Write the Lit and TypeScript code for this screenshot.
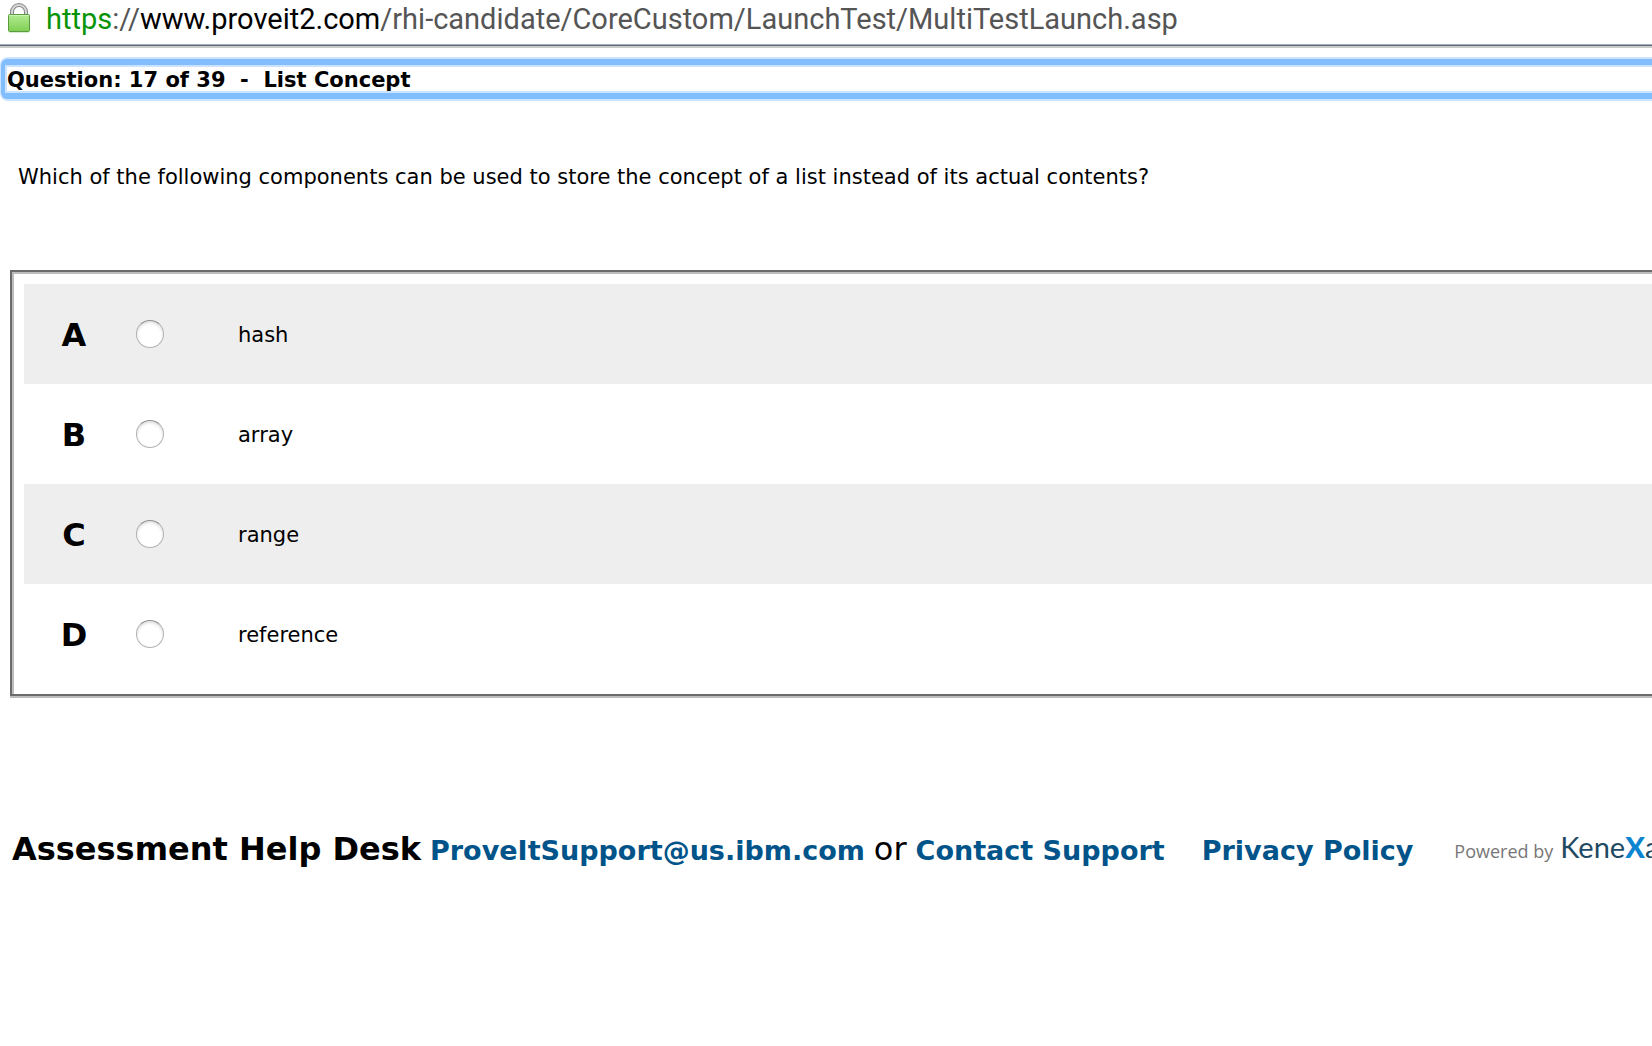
import { LitElement, html, css } from "lit";
import { customElement, state } from "lit/decorators.js";

interface Option {
  letter: string;
  text: string;
}

const OPTIONS: Option[] = [
  { letter: "A", text: "hash" },
  { letter: "B", text: "array" },
  { letter: "C", text: "range" },
  { letter: "D", text: "reference" },
];

@customElement("address-bar")
class AddressBar extends LitElement {
  static styles = css`
    :host {
      display: block;
    }
    .bar {
      display: flex;
      align-items: center;
      gap: 16px;
      height: 45px;
      box-sizing: border-box;
      padding: 0 8px 7px;
      background: #fff;
      border-bottom: 1px solid #9fb0c4;
      box-shadow: 0 1px 0 #66696d, 0 3px 0 #cbcbcb;
    }
    .lock {
      display: block;
      flex: none;
    }
    .url {
      font: 29px/36px Roboto, Inter, sans-serif;
      color: #555;
      white-space: nowrap;
    }
    .scheme {
      color: #079407;
    }
    .host {
      color: #000;
    }
  `;

  render() {
    return html`
      <header class="bar">
        <svg class="lock" width="22" height="32" viewBox="0 0 22 32" aria-hidden="true">
          <defs>
            <linearGradient id="body" x1="0" y1="0" x2="0" y2="1">
              <stop offset="0" stop-color="#b4eb94" />
              <stop offset="1" stop-color="#7fcf52" />
            </linearGradient>
          </defs>
          <path d="M4 12V9a7 7 0 0 1 14 0v3" fill="none" stroke="#858585" stroke-width="4" />
          <path d="M4 12V9a7 7 0 0 1 14 0v3" fill="none" stroke="#d6d6d6" stroke-width="2" />
          <rect x="0.5" y="11.5" width="21" height="17" rx="1" fill="url(#body)" stroke="#5b9b40" />
          <path d="M1.5 12.5h19" stroke="#c9f3b0" />
          <path d="M1 29.5h20" stroke="#d5ecd0" />
        </svg>
        <span class="url"><span class="scheme">https</span>://<span class="host">www.proveit2.com</span>/rhi-candidate/CoreCustom/LaunchTest/MultiTestLaunch.asp</span>
      </header>
    `;
  }
}

@customElement("answer-list")
class AnswerList extends LitElement {
  @state() private selected = "";

  static styles = css`
    :host {
      display: block;
    }
    .box {
      padding: 12px 0 10px 12px;
      border: 2px solid #6b6b6b;
      border-right: 0;
      box-shadow: inset 2px 2px 0 #bdbdbd, 0 2px 0 #bdbdbd;
    }
    .row {
      display: grid;
      grid-template-columns: 100px 52px 1fr;
      align-items: center;
      height: 100px;
      font-size: 21px;
      line-height: 28px;
    }
    .row:nth-child(odd) {
      background: #eee;
    }
    .letter {
      text-align: center;
      font-size: 32px;
      line-height: 40px;
      font-weight: bold;
    }
    .letter,
    .text {
      padding-top: 2px;
    }
    .radio {
      appearance: none;
      box-sizing: border-box;
      width: 28px;
      height: 28px;
      margin: 0 0 0 12px;
      border: 1px solid #b2b2b2;
      border-top-color: #8f8f8f;
      border-radius: 50%;
      background: #fff;
      box-shadow: inset 0 2px 3px #e0e0e0;
    }
    .radio:checked {
      background: radial-gradient(circle, #333 0 5px, #fff 6px);
    }
    .text {
      padding-left: 62px;
    }
  `;

  render() {
    return html`
      <div class="box" role="radiogroup" aria-label="Answers">
        ${OPTIONS.map(
          (o) => html`
            <label class="row">
              <span class="letter">${o.letter}</span>
              <input
                class="radio"
                type="radio"
                name="answer"
                .value=${o.letter}
                .checked=${this.selected === o.letter}
                @change=${() => (this.selected = o.letter)}
              />
              <span class="text">${o.text}</span>
            </label>
          `
        )}
      </div>
    `;
  }
}

@customElement("help-footer")
class HelpFooter extends LitElement {
  static styles = css`
    :host {
      display: block;
    }
    .footer {
      display: flex;
      align-items: baseline;
      gap: 9px;
      padding-left: 12px;
      font-size: 32px;
      line-height: 40px;
      white-space: nowrap;
    }
    .link {
      font-size: 27px;
      font-weight: bold;
      color: #00548a;
      text-decoration: none;
    }
    .privacy {
      padding: 0 32px 0 28px;
    }
    .brand {
      display: flex;
      align-items: baseline;
      align-self: flex-start;
      gap: 7px;
      color: #777;
      font-family: "Open Sans", sans-serif;
      font-size: 18px;
      line-height: 36px;
    }
    .logo {
      font-family: Lato, sans-serif;
      font-size: 29px;
      color: #1f4a63;
    }
    .x {
      color: #0b85d0;
      font-weight: 900;
    }
  `;

  render() {
    return html`
      <footer class="footer">
        <strong>Assessment Help Desk</strong>
        <a class="link" href="mailto:ProveItSupport@us.ibm.com">ProveItSupport@us.ibm.com</a>
        <span>or</span>
        <a class="link" href="#contact">Contact Support</a>
        <a class="link privacy" href="#privacy">Privacy Policy</a>
        <span class="brand">Powered by <span class="logo">Kene<span class="x">X</span>a</span></span>
      </footer>
    `;
  }
}

@customElement("app-root")
class AppRoot extends LitElement {
  static styles = css`
    :host {
      display: block;
      min-height: 100vh;
      overflow: hidden;
      background: #fff;
      color: #000;
      font-family: Verdana, "DejaVu Sans", sans-serif;
    }
    .ring {
      margin-top: 12px;
      border: solid #cbe3fe;
      border-width: 2px 0 2px 1px;
      border-radius: 8px 0 0 8px;
    }
    .heading {
      margin: 0;
      border: solid #82bdfd;
      border-width: 6px 0 6px 4px;
      border-radius: 6px 0 0 6px;
      font-size: 21px;
      line-height: 21px;
      font-weight: bold;
      white-space: pre;
    }
    .title {
      display: block;
      padding-top: 3px;
      border: solid #cbe3fe;
      border-width: 2px 0 2px 2px;
    }
    .question {
      margin: 0;
      padding: 61px 18px 77px;
      font-size: 21px;
      line-height: 31px;
    }
    .answers {
      margin-left: 10px;
    }
    .help {
      margin-top: 133px;
    }
  `;

  render() {
    return html`
      <address-bar></address-bar>
      <main>
        <div class="ring">
          <h1 class="heading"><span class="title">Question: 17 of 39  -  List Concept</span></h1>
        </div>
        <p class="question">Which of the following components can be used to store the concept of a list instead of its actual contents?</p>
        <answer-list class="answers"></answer-list>
      </main>
      <help-footer class="help"></help-footer>
    `;
  }
}
